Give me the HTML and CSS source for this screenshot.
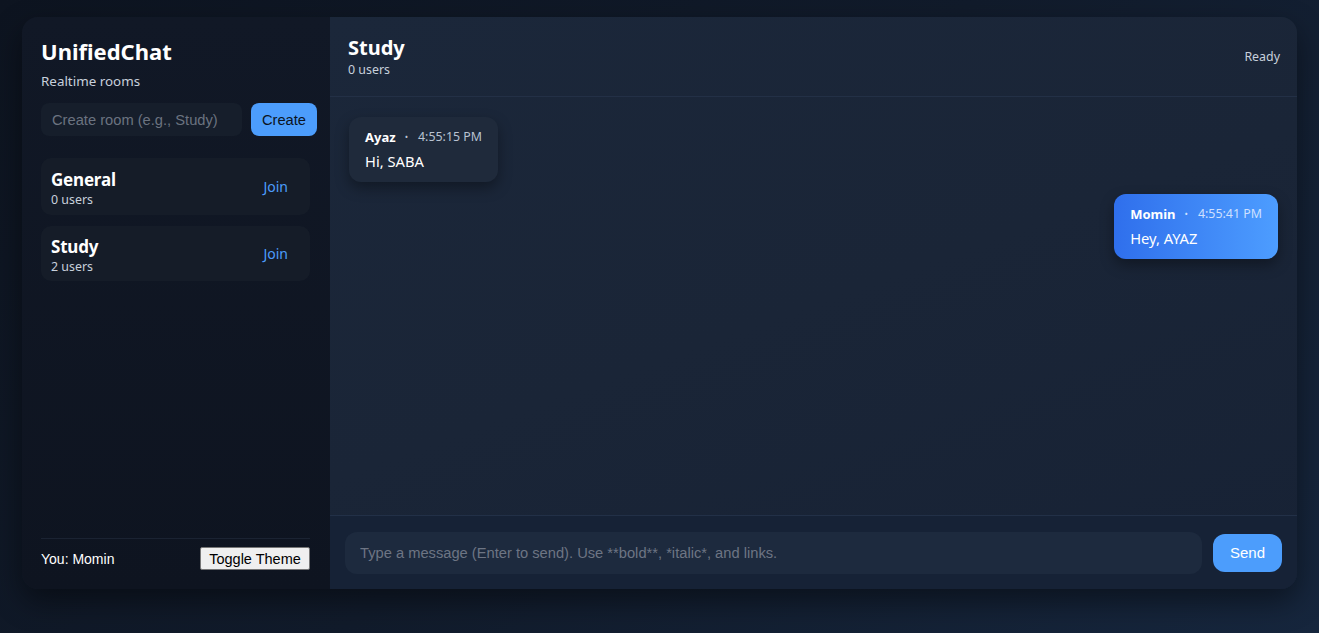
FILE: index.html
```html
<!DOCTYPE html>
<html>
<head>
<meta charset="utf-8">
<link rel="stylesheet" href="styles.css">
</head>
<body>
<div class="app">
  <aside class="sidebar">
    <div class="brand">UnifiedChat</div>
    <div class="tagline">Realtime rooms</div>
    <div class="create-row">
      <input class="room-input" type="text" placeholder="Create room (e.g., Study)">
      <button class="create-btn">Create</button>
    </div>
    <div class="rooms">
      <div class="room">
        <div class="room-info">
          <div class="room-name">General</div>
          <div class="room-count">0 users</div>
        </div>
        <a class="join">Join</a>
      </div>
      <div class="room">
        <div class="room-info">
          <div class="room-name">Study</div>
          <div class="room-count">2 users</div>
        </div>
        <a class="join">Join</a>
      </div>
    </div>
    <div class="side-footer">
      <span class="you">You: Momin</span>
      <button class="toggle">Toggle Theme</button>
    </div>
  </aside>
  <main class="chat">
    <header class="chat-head">
      <div>
        <div class="chat-title">Study</div>
        <div class="chat-count">0 users</div>
      </div>
      <div class="status">Ready</div>
    </header>
    <section class="messages">
      <div class="msg other">
        <div class="meta"><b>Ayaz</b><span class="dot">•</span><span class="time">4:55:15 PM</span></div>
        <div class="text">Hi, SABA</div>
      </div>
      <div class="msg mine">
        <div class="meta"><b>Momin</b><span class="dot">•</span><span class="time">4:55:41 PM</span></div>
        <div class="text">Hey, AYAZ</div>
      </div>
    </section>
    <footer class="composer">
      <input class="msg-input" type="text" placeholder="Type a message (Enter to send). Use **bold**, *italic*, and links.">
      <button class="send">Send</button>
    </footer>
  </main>
</div>
</body>
</html>
```

FILE: styles.css
```css
* { box-sizing: border-box; }
html, body { height: 100%; }
body {
  margin: 0;
  background: linear-gradient(135deg, #0d1420 0%, #111b2b 50%, #16263d 100%);
  font-family: "Noto Sans", "Open Sans", sans-serif;
  color: #e8edf5;
  padding: 17px 22px 44px 22px;
}
.app {
  height: 572px;
  display: flex;
  border-radius: 16px;
  overflow: hidden;
  box-shadow: 0 12px 30px rgba(0,0,0,0.45);
}
.sidebar {
  width: 308px;
  flex: none;
  background: linear-gradient(180deg, #111826 0%, #0e1420 100%);
  padding: 19px 20px 0 19px;
  display: flex;
  flex-direction: column;
}
.brand {
  font-size: 22px;
  font-weight: 700;
  color: #fff;
  line-height: 30px;
}
.tagline {
  font-size: 13.4px;
  color: #c8d0dc;
  margin-top: 6px;
  line-height: 18px;
}
.create-row {
  display: flex;
  gap: 9px;
  margin-top: 13px;
  width: 276px;
}
.room-input {
  width: 201px;
  height: 33px;
  border: none;
  border-radius: 8px;
  background: #161e2b;
  color: #e8edf5;
  padding: 0 11px;
  font-family: "Liberation Sans", Arial, sans-serif;
  font-size: 14.7px;
  outline: none;
}
.room-input::placeholder { color: #6b7380; }
.create-btn {
  width: 66px;
  height: 33px;
  border: none;
  border-radius: 8px;
  background: #4c9dfc;
  color: #0b1320;
  font-family: "Liberation Sans", Arial, sans-serif;
  font-size: 14.7px;
  padding: 0;
}
.rooms {
  display: flex;
  flex-direction: column;
  gap: 11px;
  margin-top: 22px;
  flex: 1;
}
.room {
  height: 57px;
  background: #151c28;
  border-radius: 10px;
  display: flex;
  align-items: center;
  justify-content: space-between;
  padding: 4px 22px 0 10px;
}
.room + .room { height: 55px; }
.room-name {
  font-size: 17px;
  font-weight: 700;
  color: #fff;
  line-height: 22px;
  letter-spacing: -0.2px;
}
.room-count {
  font-size: 12.4px;
  color: #c8d0dc;
  line-height: 17px;
}
.join {
  color: #4c9dfc;
  font-size: 14px;
  margin-top: -4px;
}
.side-footer {
  border-top: 1px solid #1b2332;
  height: 51px;
  display: flex;
  align-items: flex-start;
  justify-content: space-between;
  padding-top: 8px;
}
.you {
  font-family: "Liberation Sans", Arial, sans-serif;
  font-size: 14px;
  color: #fff;
  line-height: 23px;
  margin-top: 1px;
}
.toggle {
  font-family: "Liberation Sans", Arial, sans-serif;
  font-size: 14.5px;
  height: 23px;
  width: 110px;
  padding: 0;
  background: #efefef;
  color: #000;
  border: 1px solid #767676;
  border-radius: 2px;
}
.chat {
  flex: 1;
  display: flex;
  flex-direction: column;
  background: linear-gradient(160deg, #1b273a 0%, #1a2537 50%, #172235 100%);
}
.chat-head {
  height: 80px;
  flex: none;
  border-bottom: 1px solid #233046;
  display: flex;
  justify-content: space-between;
  align-items: center;
  padding: 0 17px 0 18px;
}
.chat-title {
  font-size: 20px;
  font-weight: 700;
  color: #fff;
  line-height: 26px;
}
.chat-count {
  font-size: 12.4px;
  color: #c8d0dc;
  line-height: 17px;
}
.status {
  font-size: 12.4px;
  color: #c8d0dc;
  margin-top: 0;
}
.messages {
  flex: 1;
  padding: 20px 19px;
  display: flex;
  flex-direction: column;
  gap: 12px;
}
.msg {
  border-radius: 12px;
  padding: 11px 16px 10px 16px;
  box-shadow: 0 6px 14px rgba(0,0,0,0.35);
  height: 65px;
}
.msg.other {
  align-self: flex-start;
  background: #1f2a3b;
}
.msg.mine {
  align-self: flex-end;
  background: linear-gradient(90deg, #2f6fec 0%, #4d9dff 100%);
}
.meta {
  font-size: 12.4px;
  line-height: 18px;
  color: #b9c3d2;
  display: flex;
  align-items: center;
}
.meta b {
  font-size: 13px;
  color: #fff;
}
.dot {
  margin: 0 10px 0 9px;
  font-size: 9px;
}
.mine .meta { color: #cfe0ff; }
.text {
  font-size: 14.7px;
  color: #fff;
  margin-top: 5px;
  line-height: 20px;
}
.composer {
  height: 74px;
  flex: none;
  border-top: 1px solid #223047;
  display: flex;
  align-items: center;
  gap: 11px;
  padding: 0 15px 0 15px;
  background: #162236;
}
.msg-input {
  flex: 1;
  height: 42px;
  border: none;
  border-radius: 12px;
  background: #1d2a3e;
  color: #e8edf5;
  padding: 0 15px;
  font-family: "Liberation Sans", Arial, sans-serif;
  font-size: 14.7px;
  outline: none;
}
.msg-input::placeholder { color: #6d7584; }
.send {
  width: 69px;
  height: 38px;
  border: none;
  border-radius: 12px;
  background: #4c9dfc;
  color: #fff;
  font-family: "Liberation Sans", Arial, sans-serif;
  font-size: 15px;
  padding: 0;
}
```
